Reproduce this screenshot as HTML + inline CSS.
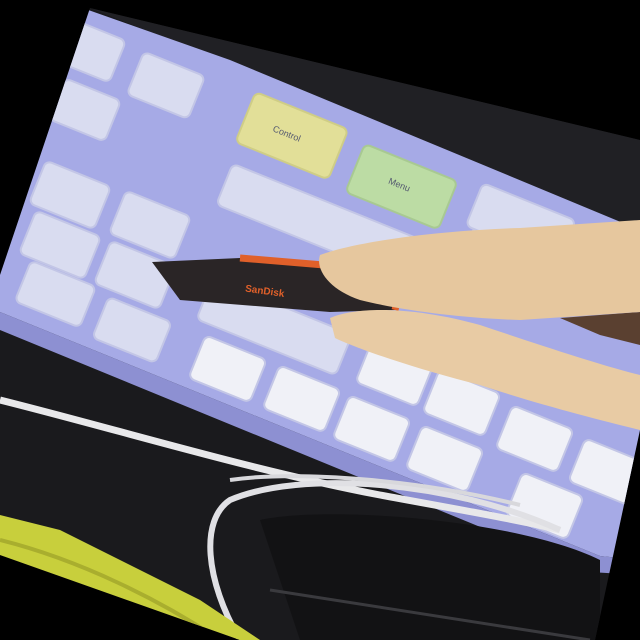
<!DOCTYPE html>
<html><head><meta charset="utf-8"><style>
html,body{margin:0;padding:0;background:#000;width:640px;height:640px;overflow:hidden}
svg{display:block}
text{font-family:"Liberation Sans",sans-serif;font-size:9px;fill:#555a70}
</style></head><body>
<svg width="640" height="640" viewBox="0 0 640 640" xmlns="http://www.w3.org/2000/svg">
<defs>
<clipPath id="img"><polygon points="90,8 640,140 640,430 595,640 240,640 0,555 0,275"/></clipPath>
</defs>
<rect width="640" height="640" fill="#000"/>
<g clip-path="url(#img)">
<rect width="640" height="640" fill="#1a1a1d"/>
<polygon points="90,8 640,140 640,230 220,60" fill="#202024"/>
<polygon points="60,0 230,60 640,230 640,560 600,556 0,312 0,0" fill="#a6aae6"/>
<polygon points="0,312 600,556 640,560 640,575 590,572 0,330" fill="#8d90d2"/>
<g fill="#d9dcf0" stroke="#c3c6e6" stroke-width="2">
<g transform="rotate(22 90 50)"><rect x="60" y="28" width="60" height="45" rx="6"/></g>
<g transform="rotate(22 165 85)"><rect x="133" y="62" width="66" height="46" rx="6"/></g>
<g transform="rotate(22 85 110)"><rect x="55" y="88" width="60" height="44" rx="6"/></g>
<g transform="rotate(22 70 195)"><rect x="35" y="172" width="70" height="46" rx="6"/></g>
<g transform="rotate(22 150 225)"><rect x="115" y="202" width="70" height="46" rx="6"/></g>
<g transform="rotate(22 60 245)"><rect x="25" y="222" width="70" height="46" rx="6"/></g>
<g transform="rotate(22 135 275)"><rect x="100" y="252" width="70" height="46" rx="6"/></g>
<g transform="rotate(22 55 295)"><rect x="20" y="272" width="70" height="44" rx="6"/></g>
<g transform="rotate(22 132 330)"><rect x="98" y="308" width="68" height="44" rx="6"/></g>
<g transform="rotate(22 275 325)"><rect x="200" y="305" width="150" height="44" rx="6"/></g>
<g transform="rotate(22 228 368)"><rect x="195" y="346" width="66" height="46" rx="6" fill="#f0f1f7"/></g>
<g transform="rotate(22 302 398)"><rect x="269" y="376" width="66" height="46" rx="6" fill="#f0f1f7"/></g>
<g transform="rotate(22 372 428)"><rect x="339" y="406" width="66" height="46" rx="6" fill="#f0f1f7"/></g>
<g transform="rotate(22 445 458)"><rect x="412" y="436" width="66" height="46" rx="6" fill="#f0f1f7"/></g>
<g transform="rotate(22 545 505)"><rect x="512" y="483" width="66" height="46" rx="6" fill="#f0f1f7"/></g>
<g transform="rotate(22 395 372)"><rect x="362" y="350" width="66" height="46" rx="6" fill="#f0f1f7"/></g>
<g transform="rotate(22 462 402)"><rect x="429" y="380" width="66" height="46" rx="6" fill="#f0f1f7"/></g>
<g transform="rotate(22 535 438)"><rect x="502" y="416" width="66" height="46" rx="6" fill="#f0f1f7"/></g>
<g transform="rotate(22 605 470)"><rect x="575" y="448" width="66" height="46" rx="6" fill="#f0f1f7"/></g>
<g transform="rotate(22 330 230)"><rect x="215" y="205" width="240" height="44" rx="6"/></g>
<g transform="rotate(22 530 250)"><rect x="470" y="228" width="110" height="46" rx="6"/></g>
<g transform="rotate(22 290 135)"><rect x="242" y="108" width="100" height="54" rx="6" fill="#e2df98" stroke="#cfcd86"/></g>
<g transform="rotate(22 400 185)"><rect x="352" y="160" width="100" height="52" rx="6" fill="#bcdca4" stroke="#a8c992"/></g>
<g transform="rotate(22 520 225)"><rect x="470" y="200" width="100" height="46" rx="6"/></g>
</g>
<g transform="rotate(22 290 135)"><text x="272" y="138">Control</text></g>
<g transform="rotate(22 400 185)"><text x="388" y="188">Menu</text></g>
<path d="M0,400 C120,430 250,470 380,495 C450,508 520,520 560,530" stroke="#e8e8ea" stroke-width="7" fill="none"/>
<path d="M560,530 C450,480 300,470 230,500 C200,520 205,580 240,640" stroke="#e0e0e4" stroke-width="6" fill="none"/>
<path d="M230,480 C300,470 420,480 520,505" stroke="#d8d8dc" stroke-width="4" fill="none"/>
<path d="M260,520 C330,505 520,520 600,560 L600,640 L300,640 Z" fill="#121214"/>
<path d="M270,590 L590,640" stroke="#3a3a3e" stroke-width="3"/>
<polygon points="0,515 60,530 200,600 260,640 0,640" fill="#c8cf3c"/>
<path d="M0,540 C80,560 160,600 220,640" stroke="#a9ae2e" stroke-width="4" fill="none"/>
<polygon points="152,262 240,258 360,268 400,290 395,310 330,312 180,300" fill="#2a2526"/>
<path d="M240,258 L360,268 L400,290 L395,310" stroke="#e0602a" stroke-width="7" fill="none"/>
<text x="245" y="295" style="fill:#e0602a;font-weight:bold;font-size:10px" transform="rotate(8 270 292)">SanDisk</text>
<path d="M560,318 L640,312 L640,345 L600,335 Z" fill="#5a4030"/>
<path d="M320,255 C360,240 450,230 520,228 L640,220 L640,312 L520,320 C460,318 400,310 360,300 C330,290 315,270 320,255 Z" fill="#e6c79e"/>
<path d="M330,318 C360,305 420,308 480,325 C540,345 600,365 640,375 L640,430 C600,420 540,405 480,385 C420,370 360,350 335,338 Z" fill="#e8cba4"/>
</g>
</svg>
</body></html>
